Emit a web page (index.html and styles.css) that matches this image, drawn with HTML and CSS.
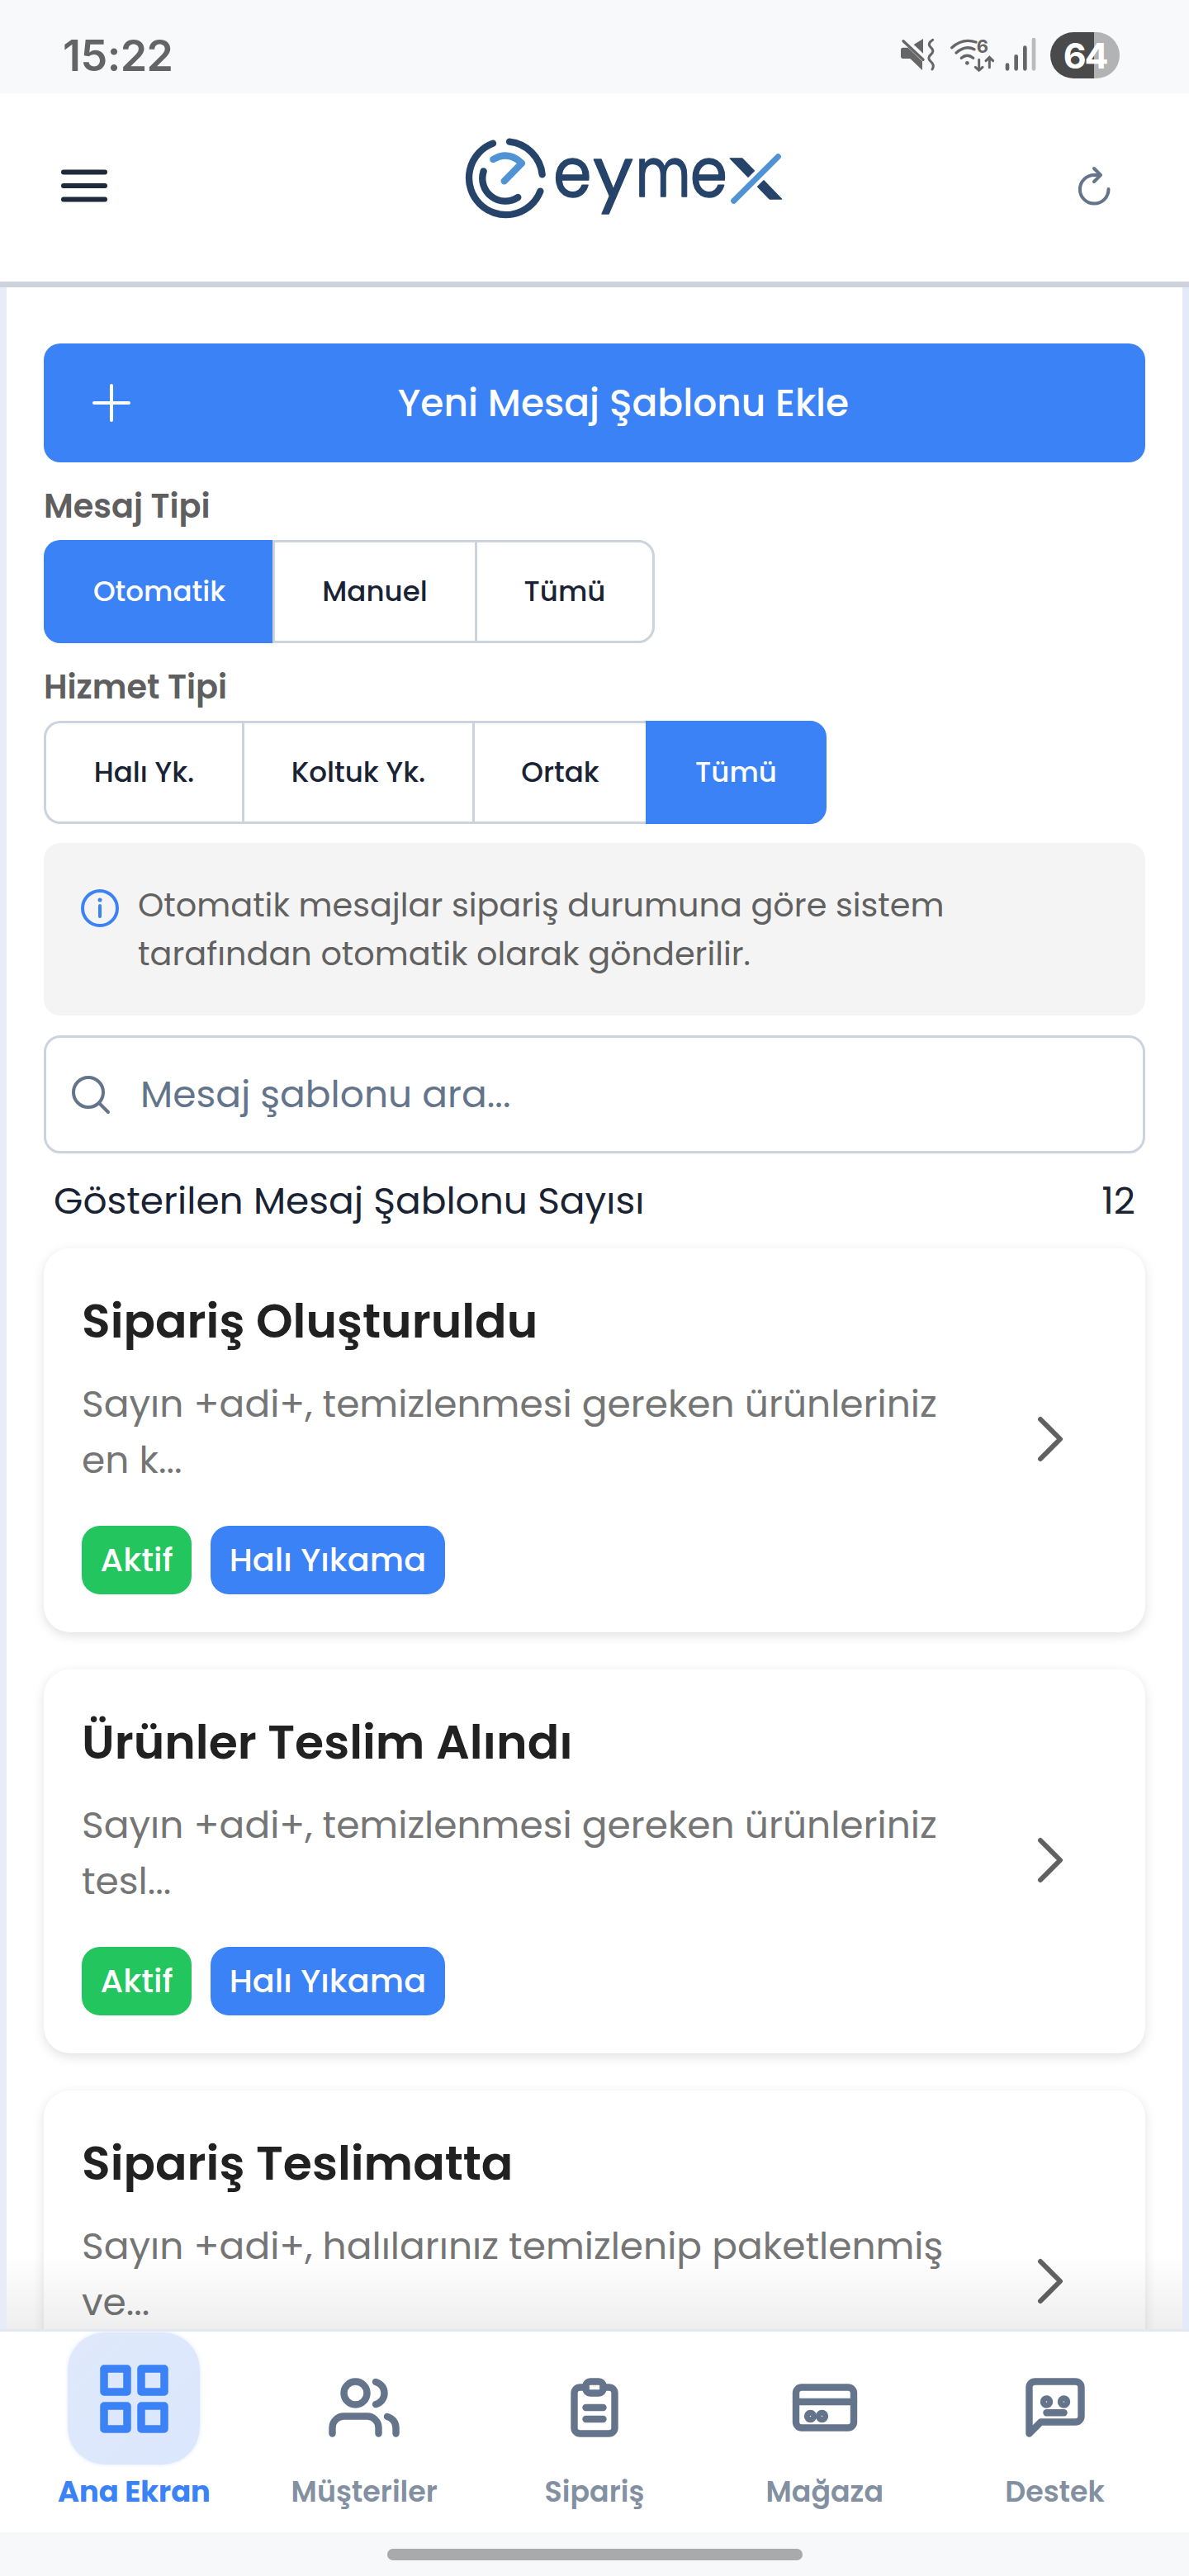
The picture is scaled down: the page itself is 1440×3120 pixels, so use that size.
FILE: index.html
```html
<!DOCTYPE html>
<html lang="tr">
<head>
    <meta charset="UTF-8">
    <meta name="viewport" content="width=device-width, initial-scale=1.0">
    <title>Mesaj Şablonları</title>
    <link rel="stylesheet" href="styles.css">
</head>
<body>
    <div class="status-bar">
        <span class="time">15:22</span>
        <div class="status-icons">
            <svg width="170" height="60" viewBox="0 0 510 180" fill="none" stroke="#666" stroke-width="11" stroke-linecap="round">
                <!-- muted speaker with vibration -->
                <path d="M14 66h18l52 50v32L40 106H14q-8 0-8-8V74q0-8 8-8z" fill="#666" stroke="none" transform="translate(0 -4)"/>
                <path d="M87 30v53L53 51z" fill="#666" stroke="none"/>
                <path d="M15 38l72 68" stroke-width="10"/>
                <path d="M122 34q-22 14-7 27t0 26q-15 13 0 26t5 28" stroke-width="9"/>
                <!-- wifi -->
                <path d="M191 62q40-36 88-20M207 81q33-29 66-13M226 100q21-18 43 0" stroke-width="10"/>
                <circle cx="247" cy="118" r="7" fill="#666" stroke="none"/>
                <path d="M290 106v38M277 133l13 12 13-12M328 134V98M315 110l13-13 13 13" stroke-width="9"/>
                <text class="wifi-gen" x="281" y="80">6</text>
                <!-- signal -->
                <path d="M393 125v14M425 94v45M457 62v77" stroke-width="14"/>
                <path d="M489 33v106" stroke="#bbb" stroke-width="14"/>
            </svg>
            <span class="battery">64</span>
        </div>
    </div>

    <header class="header">
        <svg class="menu-icon" width="58" height="42" viewBox="0 0 58 42" stroke="#1e293b" stroke-width="6" stroke-linecap="round">
            <path d="M4 4.500h50M4 21h50M4 37.500h50"/>
        </svg>
        <svg class="logo" width="390" height="105" viewBox="60 70 1170 315" fill="none" stroke="#264369" stroke-width="25" stroke-linecap="round" stroke-linejoin="round">
            <path d="M171 99A134 134 0 1 0 343 273M231 93A134 134 0 0 1 350 212"/>
            <path d="M137 200A83 83 0 0 0 262 295"/>
            <path d="M172 157Q227 124 276 171L212 236" stroke="#4f93d4"/>
            <g class="wordmark">
                <text x="391" y="293" textLength="138" lengthAdjust="spacingAndGlyphs">e</text>
                <text x="535" y="293" textLength="146" lengthAdjust="spacingAndGlyphs">y</text>
                <text x="689" y="293" textLength="200" lengthAdjust="spacingAndGlyphs">m</text>
                <text x="888" y="293" textLength="134" lengthAdjust="spacingAndGlyphs">e</text>
                <text class="wordmark-x" x="1028" y="301" textLength="196" lengthAdjust="spacingAndGlyphs">x</text>
            </g>
            <path d="M1030 324L1223 131" stroke="#fff" stroke-width="46" stroke-linecap="butt"/>
            <path d="M1046 308L1207 147" stroke="#4f93d4" stroke-width="21"/>
        </svg>
        <svg class="refresh-icon" width="44" height="50" viewBox="0 0 44 50" fill="none" stroke="#64748b" stroke-width="4" stroke-linecap="round" stroke-linejoin="round">
            <path d="M37.500 29A17.300 17.300 0 1 1 20.200 12H27M20 4l8 8-8 8"/>
        </svg>
    </header>

    <main class="content">
        <button class="add-button">
            <svg width="46" height="46" viewBox="0 0 46 46" stroke="#fff" stroke-width="4" stroke-linecap="round">
                <path d="M23 2v42M2 23h42"/>
            </svg>
            <span>Yeni Mesaj Şablonu Ekle</span>
        </button>

        <div class="filter-label">Mesaj Tipi</div>
        <div class="segment segment-type">
            <div class="option active">Otomatik</div>
            <div class="option">Manuel</div>
            <div class="option">Tümü</div>
        </div>

        <div class="filter-label">Hizmet Tipi</div>
        <div class="segment segment-service">
            <div class="option">Halı Yk.</div>
            <div class="option">Koltuk Yk.</div>
            <div class="option">Ortak</div>
            <div class="option active">Tümü</div>
        </div>

        <div class="info">
            <svg width="48" height="48" viewBox="0 0 48 48" fill="none" stroke="#3b82f6" stroke-width="4" stroke-linecap="round">
                <circle cx="24" cy="24" r="21"/>
                <path d="M24 21v13"/>
                <circle cx="24" cy="14" r="2.500" fill="#3b82f6" stroke="none"/>
            </svg>
            <p>Otomatik mesajlar sipariş durumuna göre sistem tarafından otomatik olarak gönderilir.</p>
        </div>

        <div class="search">
            <svg width="48" height="48" viewBox="0 0 48 48" fill="none" stroke="#64748b" stroke-width="4" stroke-linecap="round">
                <circle cx="21" cy="21" r="18"/>
                <path d="M34 34l11 11"/>
            </svg>
            <span>Mesaj şablonu ara...</span>
        </div>

        <div class="count">
            <span>Gösterilen Mesaj Şablonu Sayısı</span>
            <span>12</span>
        </div>

        <div class="cards">
            <div class="card">
                <div class="card-body">
                    <h2>Sipariş Oluşturuldu</h2>
                    <p>Sayın +adi+, temizlenmesi gereken ürünleriniz en k...</p>
                    <div class="badges">
                        <span class="badge green">Aktif</span>
                        <span class="badge blue">Halı Yıkama</span>
                    </div>
                </div>
                <svg class="chevron" width="36" height="60" viewBox="0 0 36 60" fill="none" stroke="#616161" stroke-width="6" stroke-linecap="round" stroke-linejoin="round">
                    <path d="M6 6l24 24L6 54"/>
                </svg>
            </div>

            <div class="card">
                <div class="card-body">
                    <h2>Ürünler Teslim Alındı</h2>
                    <p>Sayın +adi+, temizlenmesi gereken ürünleriniz tesl...</p>
                    <div class="badges">
                        <span class="badge green">Aktif</span>
                        <span class="badge blue">Halı Yıkama</span>
                    </div>
                </div>
                <svg class="chevron" width="36" height="60" viewBox="0 0 36 60" fill="none" stroke="#616161" stroke-width="6" stroke-linecap="round" stroke-linejoin="round">
                    <path d="M6 6l24 24L6 54"/>
                </svg>
            </div>

            <div class="card">
                <div class="card-body">
                    <h2>Sipariş Teslimatta</h2>
                    <p>Sayın +adi+, halılarınız temizlenip paketlenmiş ve...</p>
                </div>
                <svg class="chevron" width="36" height="60" viewBox="0 0 36 60" fill="none" stroke="#616161" stroke-width="6" stroke-linecap="round" stroke-linejoin="round">
                    <path d="M6 6l24 24L6 54"/>
                </svg>
            </div>
        </div>
        <div class="fade"></div>
    </main>

    <nav class="bottom-nav">
        <div class="nav-item active">
            <div class="nav-icon">
                <svg width="83" height="83" viewBox="0 0 83 83" fill="none" stroke="#3b82f6" stroke-width="9.500" stroke-linejoin="round">
                    <path d="M5 5h28v28H5zM50 5h28v28H50zM5 50h28v28H5zM50 50h28v28H50z"/>
                </svg>
            </div>
            <span>Ana Ekran</span>
        </div>
        <div class="nav-item">
            <div class="nav-icon">
                <svg class="line-icon" viewBox="0 0 24 24">
                    <path d="M17 21v-2a4 4 0 0 0-4-4H5a4 4 0 0 0-4 4v2"/>
                    <circle cx="9" cy="7" r="4"/>
                    <path d="M23 21v-2a4 4 0 0 0-3-3.870M16 3.130a4 4 0 0 1 0 7.750"/>
                </svg>
            </div>
            <span>Müşteriler</span>
        </div>
        <div class="nav-item">
            <div class="nav-icon">
                <svg class="line-icon" viewBox="0 0 24 24">
                    <path d="M9 5H7a2 2 0 0 0-2 2v12a2 2 0 0 0 2 2h10a2 2 0 0 0 2-2V7a2 2 0 0 0-2-2h-2"/>
                    <rect x="9" y="3" width="6" height="4" rx="1.500"/>
                    <path d="M9 12h6M9 16h6"/>
                </svg>
            </div>
            <span>Sipariş</span>
        </div>
        <div class="nav-item">
            <div class="nav-icon">
                <svg class="line-icon" viewBox="0 0 24 24">
                    <rect x="2" y="5" width="20" height="14" rx="2"/>
                    <path d="M2 10h20"/>
                    <circle cx="7" cy="15" r="1"/>
                    <circle cx="11" cy="15" r="1"/>
                </svg>
            </div>
            <span>Mağaza</span>
        </div>
        <div class="nav-item">
            <div class="nav-icon">
                <svg class="line-icon" viewBox="0 0 24 24">
                    <path d="M21 15a2 2 0 0 1-2 2H7l-4 4V5a2 2 0 0 1 2-2h14a2 2 0 0 1 2 2z"/>
                    <circle cx="9" cy="10" r="1"/>
                    <circle cx="15" cy="10" r="1"/>
                    <path d="M9 13.800h6"/>
                </svg>
            </div>
            <span>Destek</span>
        </div>
    </nav>

    <div class="gesture-bar">
        <div class="gesture-pill"></div>
    </div>
</body>
</html>
```
FILE: styles.css
```css
* {
    box-sizing: border-box;
}

body {
    font-family: "Poppins", "Inter", sans-serif;
    display: flex;
    flex-direction: column;
    width: 1440px;
    height: 3120px;
    margin: 0;
    background-color: #fff;
    color: #1a2333;
    overflow: hidden;
}

svg {
    display: block;
    flex-shrink: 0;
    overflow: visible;
}

/* Status bar */
.status-bar {
    display: flex;
    align-items: center;
    justify-content: space-between;
    height: 113px;
    padding: 21px 84px 0 76px;
    background-color: #f7f9fb;
    font-family: "Inter", sans-serif;
}

.time {
    font-size: 52px;
    font-weight: 600;
    letter-spacing: -0.01em;
    color: #646464;
}

.status-icons {
    display: flex;
    align-items: center;
    gap: 13px;
}

.wifi-gen {
    fill: #666;
    stroke: none;
    font-size: 66px;
    font-weight: 700;
}

.battery {
    width: 84px;
    height: 56px;
    border-radius: 28px;
    background: linear-gradient(90deg, #4a4a4a 63%, #b2b3b4 63%);
    color: #fff;
    font-size: 43px;
    font-weight: 700;
    line-height: 56px;
    letter-spacing: -0.05em;
    text-align: center;
}

/* Header */
.header {
    display: flex;
    align-items: center;
    height: 235px;
    padding: 0 91px 4px 73px;
    border-bottom: 7px solid #cdd2dc;
}

.logo {
    margin: 0 auto 18px 429px;
}

.wordmark {
    font-family: "Poppins", "Inter", sans-serif;
    font-size: 246px;
    fill: #264369;
    stroke-width: 4;
}

.wordmark-x {
    font-size: 268px;
}

/* Content */
.content {
    position: relative;
    height: 2473px;
    padding: 68px 45px 0;
    border-left: 8px solid #e8ebf8;
    border-right: 8px solid #e4eaf8;
    overflow: hidden;
}

.add-button {
    display: flex;
    align-items: center;
    width: 100%;
    height: 144px;
    padding: 0 59px;
    border: none;
    border-radius: 20px;
    background-color: #3b82f6;
    color: #fff;
    font: inherit;
    font-size: 45.5px;
    font-weight: 500;
}

.add-button span {
    flex: 1;
    margin-left: 24px;
    text-align: center;
}

.filter-label {
    height: 94px;
    padding-top: 11px;
    font-size: 39.8px;
    font-weight: 600;
    line-height: 85px;
    color: #5f5f5f;
}

.segment {
    display: grid;
    height: 125px;
}

.segment-type {
    grid-template-columns: 277px 245px 218px;
}

.segment-service {
    grid-template-columns: 240px 279px 210px 219px;
}

.option {
    border: 3px solid #cdd3dc;
    border-right-width: 0;
    font-size: 34.1px;
    font-weight: 500;
    line-height: 119px;
    text-align: center;
}

.option:first-child {
    border-radius: 20px 0 0 20px;
}

.option:last-child {
    border-right-width: 3px;
    border-radius: 0 20px 20px 0;
}

.option.active {
    border-color: #3b82f6;
    background-color: #3b82f6;
    color: #fff;
}

.info {
    display: flex;
    height: 209px;
    margin-top: 23px;
    padding: 46px 44px 44px;
    border-radius: 20px;
    background-color: #f4f4f4;
    color: #616161;
}

.info svg {
    margin-top: 9px;
}

.info p {
    width: 1080px;
    margin: 0 0 0 22px;
    font-size: 39.8px;
    line-height: 59px;
}

.search {
    display: flex;
    align-items: center;
    gap: 36px;
    height: 143px;
    margin-top: 24px;
    padding: 0 30px;
    border: 3px solid #cdd3de;
    border-radius: 20px;
    font-size: 45.5px;
    color: #64748b;
}

.count {
    display: flex;
    align-items: center;
    justify-content: space-between;
    height: 115px;
    padding: 0 12px;
    font-size: 45.5px;
}

/* Cards */
.cards {
    display: flex;
    flex-direction: column;
    gap: 45px;
}

.card {
    display: flex;
    align-items: center;
    justify-content: space-between;
    height: 465px;
    padding: 0 97px 0 46px;
    border-radius: 32px;
    background-color: #fff;
    box-shadow: 0 4px 14px rgba(0, 0, 0, 0.12);
}

.card-body {
    align-self: flex-start;
    width: 1090px;
    padding-top: 48px;
}

.card h2 {
    margin: 0 0 25px;
    font-size: 56.9px;
    font-weight: 600;
    line-height: 81px;
    color: #212121;
}

.card p {
    margin: 0 0 46px;
    font-size: 45.5px;
    line-height: 68px;
    color: #757575;
}

.chevron {
    margin-bottom: 3px;
}

.badges {
    display: flex;
    gap: 23px;
}

.badge {
    height: 83px;
    padding: 0 22.5px;
    border-radius: 22px;
    color: #fff;
    font-size: 39.8px;
    font-weight: 500;
    line-height: 83px;
}

.badge.green {
    background-color: #22c55e;
}

.badge.blue {
    background-color: #3b82f6;
}

/* shadow that the bottom bar throws on the list */
.fade {
    position: absolute;
    left: 0;
    right: 0;
    bottom: 0;
    height: 90px;
    background: linear-gradient(rgba(0, 0, 0, 0), rgba(0, 0, 0, 0.065));
}

/* Bottom navigation */
.bottom-nav {
    display: flex;
    height: 246px;
    padding: 12px 23px 0;
    border-top: 3px solid #e2e8f0;
    background-color: #fff;
}

.nav-item {
    flex: 1;
    display: flex;
    flex-direction: column;
    align-items: center;
    font-size: 34.8px;
    font-weight: 600;
    line-height: 43px;
    color: #8390a2;
}

.nav-icon {
    display: flex;
    align-items: center;
    justify-content: center;
    width: 160px;
    height: 160px;
}

.line-icon {
    width: 84px;
    height: 84px;
    fill: none;
    stroke: #64748b;
    stroke-width: 2.4;
    stroke-linecap: round;
    stroke-linejoin: round;
}

.nav-item.active {
    color: #3b82f6;
    font-size: 35.3px;
    font-weight: 700;
}

.nav-item.active .nav-icon {
    transform: translateY(-11px);
    border-radius: 45px;
    background: linear-gradient(135deg, #e0e9fb, #dbe7fe);
    box-shadow: 0 0 5px #dfe9fd;
}

.gesture-bar {
    display: flex;
    justify-content: center;
    height: 53px;
    padding-top: 20px;
    background-color: #f7f8fa;
}

.gesture-pill {
    width: 503px;
    height: 14px;
    border-radius: 7px;
    background-color: #a9aaac;
}
```
